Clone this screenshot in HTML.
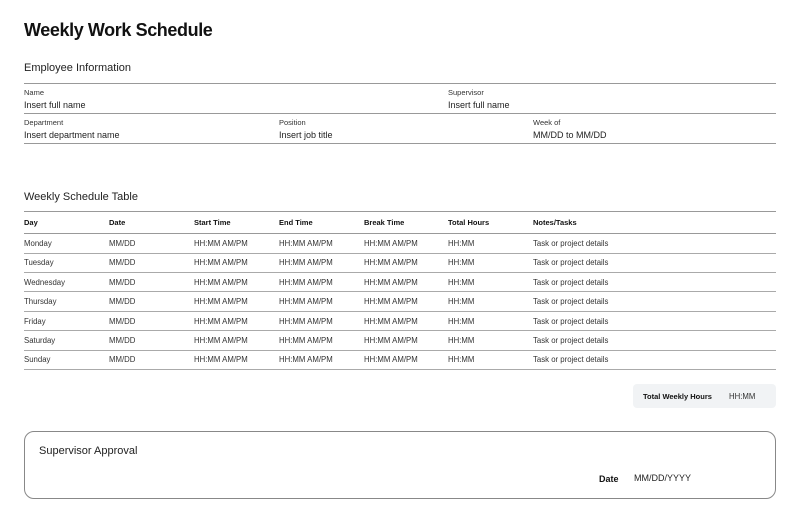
<!DOCTYPE html>
<html><head><meta charset="utf-8"><style>
*{margin:0;padding:0;box-sizing:border-box}
body{width:800px;height:523px;background:#fff;font-family:"Liberation Sans",sans-serif;color:#111;position:relative;overflow:hidden}
.a{position:absolute;white-space:nowrap}
.h1{left:24px;top:20px;font-size:18px;font-weight:bold;letter-spacing:-0.4px}
.h2{font-size:11px;color:#222}
.lab{font-size:7.5px;color:#333}
.val{font-size:9px;color:#222}
.ln{position:absolute;left:24px;width:752px;height:1px;background:#999}
.lnl{position:absolute;left:24px;width:752px;height:1px;background:#aaa}
.th{font-size:7.5px;font-weight:bold}
.td{font-size:7.8px;color:#333}
</style></head><body>
<div class="a h1">Weekly Work Schedule</div>
<div class="a h2" style="left:24px;top:62px">Employee Information</div>
<div class="ln" style="top:83px"></div>
<div class="a lab" style="left:24px;top:88px">Name</div>
<div class="a val" style="left:24px;top:99.5px">Insert full name</div>
<div class="a lab" style="left:448px;top:88px">Supervisor</div>
<div class="a val" style="left:448px;top:99.5px">Insert full name</div>
<div class="ln" style="top:113px"></div>
<div class="a lab" style="left:24px;top:118px">Department</div>
<div class="a val" style="left:24px;top:129.5px">Insert department name</div>
<div class="a lab" style="left:279px;top:118px">Position</div>
<div class="a val" style="left:279px;top:129.5px">Insert job title</div>
<div class="a lab" style="left:533px;top:118px">Week of</div>
<div class="a val" style="left:533px;top:129.5px">MM/DD to MM/DD</div>
<div class="ln" style="top:143px"></div>

<div class="a h2" style="left:24px;top:190.5px">Weekly Schedule Table</div>
<div class="ln" style="top:211px"></div>
<div class="a th" style="left:24px;top:218px">Day</div>
<div class="a th" style="left:109px;top:218px">Date</div>
<div class="a th" style="left:194px;top:218px">Start Time</div>
<div class="a th" style="left:279px;top:218px">End Time</div>
<div class="a th" style="left:364px;top:218px">Break Time</div>
<div class="a th" style="left:448px;top:218px">Total Hours</div>
<div class="a th" style="left:533px;top:218px">Notes/Tasks</div>
<div class="ln" style="top:233px"></div>
<div id="rows"></div>
<script>
var d=["Monday","Tuesday","Wednesday","Thursday","Friday","Saturday","Sunday"],h="";
for(var i=0;i<7;i++){var t=239+i*19.4;
h+='<div class="a td" style="left:24px;top:'+t+'px">'+d[i]+'</div><div class="a td" style="left:109px;top:'+t+'px">MM/DD</div><div class="a td" style="left:194px;top:'+t+'px">HH:MM AM/PM</div><div class="a td" style="left:279px;top:'+t+'px">HH:MM AM/PM</div><div class="a td" style="left:364px;top:'+t+'px">HH:MM AM/PM</div><div class="a td" style="left:448px;top:'+t+'px">HH:MM</div><div class="a td" style="left:533px;top:'+t+'px">Task or project details</div><div class="lnl" style="top:'+(252.5+i*19.4)+'px"></div>';}
document.getElementById("rows").innerHTML=h;
</script>
<div class="a" style="left:633px;top:384px;width:143px;height:24px;background:#f1f3f5;border-radius:4px"></div>
<div class="a th" style="left:643px;top:392px">Total Weekly Hours</div>
<div class="a td" style="left:729px;top:392px">HH:MM</div>

<div class="a" style="left:24px;top:431px;width:752px;height:68px;border:1px solid #888;border-radius:10px"></div>
<div class="a h2" style="left:39px;top:445px">Supervisor Approval</div>
<div class="a" style="left:599px;top:473.5px;font-size:9px;font-weight:bold">Date</div>
<div class="a val" style="left:634px;top:473px">MM/DD/YYYY</div>
</body></html>
